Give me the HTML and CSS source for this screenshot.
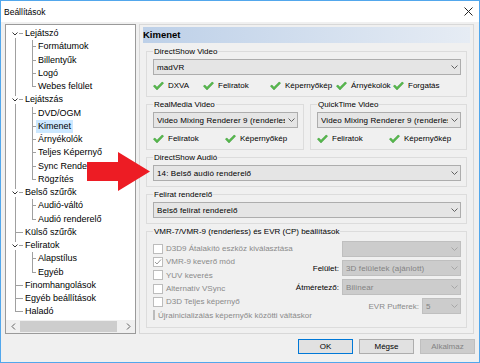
FILE: index.html
```html
<!DOCTYPE html>
<html lang="hu">
<head>
  <meta charset="UTF-8" />
  <title>Beállítások</title>
  <link rel="stylesheet" href="styles.css">
</head>
<body>
  <div class="window">
    <div class="titlebar">
      <span class="title">Beállítások</span>
      <svg class="close" width="9" height="9" viewBox="0 0 9 9"><path d="M0.5 0.5 L8.5 8.5 M8.5 0.5 L0.5 8.5" stroke="#222" stroke-width="1"/></svg>
    </div>

    <div class="main">
      <div class="tree">
        <div class="rows">
          <div class="row"><span class="c1 first"><i class="chev"><svg width="8" height="8" viewBox="0 0 8 8"><path d="M1.5 2.5 L4 5 L6.5 2.5" fill="none" stroke="#333"/></svg></i></span><span class="lbl">Lejátszó</span></div>
          <div class="row"><span class="c1 pass"></span><span class="c2"></span><span class="lbl">Formátumok</span></div>
          <div class="row"><span class="c1 pass"></span><span class="c2"></span><span class="lbl">Billentyűk</span></div>
          <div class="row"><span class="c1 pass"></span><span class="c2"></span><span class="lbl">Logó</span></div>
          <div class="row"><span class="c1 pass"></span><span class="c2 last"></span><span class="lbl">Webes felület</span></div>
          <div class="row"><span class="c1"><i class="chev"><svg width="8" height="8" viewBox="0 0 8 8"><path d="M1.5 2.5 L4 5 L6.5 2.5" fill="none" stroke="#333"/></svg></i></span><span class="lbl">Lejátszás</span></div>
          <div class="row"><span class="c1 pass"></span><span class="c2"></span><span class="lbl">DVD/OGM</span></div>
          <div class="row"><span class="c1 pass"></span><span class="c2"></span><span class="lbl selected">Kimenet</span></div>
          <div class="row"><span class="c1 pass"></span><span class="c2"></span><span class="lbl">Árnyékolók</span></div>
          <div class="row"><span class="c1 pass"></span><span class="c2"></span><span class="lbl">Teljes Képernyő</span></div>
          <div class="row"><span class="c1 pass"></span><span class="c2"></span><span class="lbl">Sync Renderer</span></div>
          <div class="row"><span class="c1 pass"></span><span class="c2 last"></span><span class="lbl">Rögzítés</span></div>
          <div class="row"><span class="c1"><i class="chev"><svg width="8" height="8" viewBox="0 0 8 8"><path d="M1.5 2.5 L4 5 L6.5 2.5" fill="none" stroke="#333"/></svg></i></span><span class="lbl">Belső szűrők</span></div>
          <div class="row"><span class="c1 pass"></span><span class="c2"></span><span class="lbl">Audió-váltó</span></div>
          <div class="row"><span class="c1 pass"></span><span class="c2 last"></span><span class="lbl">Audió renderelő</span></div>
          <div class="row"><span class="c1"></span><span class="lbl">Külső szűrők</span></div>
          <div class="row"><span class="c1"><i class="chev"><svg width="8" height="8" viewBox="0 0 8 8"><path d="M1.5 2.5 L4 5 L6.5 2.5" fill="none" stroke="#333"/></svg></i></span><span class="lbl">Feliratok</span></div>
          <div class="row"><span class="c1 pass"></span><span class="c2"></span><span class="lbl">Alapstílus</span></div>
          <div class="row"><span class="c1 pass"></span><span class="c2 last"></span><span class="lbl">Egyéb</span></div>
          <div class="row"><span class="c1"></span><span class="lbl">Finomhangolások</span></div>
          <div class="row"><span class="c1"></span><span class="lbl">Egyéb beállítások</span></div>
          <div class="row"><span class="c1 last"></span><span class="lbl">Haladó</span></div>
        </div>
        <div class="hscroll">
          <span class="sbtn"><svg width="5" height="7" viewBox="0 0 5 7"><path d="M4 0.5 L1 3.5 L4 6.5" fill="none" stroke="#606060"/></svg></span>
          <span class="thumb"></span>
          <span class="track"></span>
          <span class="sbtn"><svg width="5" height="7" viewBox="0 0 5 7"><path d="M1 0.5 L4 3.5 L1 6.5" fill="none" stroke="#606060"/></svg></span>
        </div>
      </div>

      <div class="page">
        <div class="caption">Kimenet</div>

        <fieldset class="group">
          <legend>DirectShow Video</legend>
          <div class="combo"><span>madVR</span><svg width="7" height="4" viewBox="0 0 7 4"><path d="M0.5 0.5 L3.5 3.5 L6.5 0.5" fill="none" stroke="#606060"/></svg></div>
          <div class="checks five">
            <span class="chk"><svg width="11" height="9" viewBox="0 0 11 9"><path d="M1 4.5 L4 7.5 L10 1.5" fill="none" stroke="#3f9f3a" stroke-width="2.4"/><path d="M1 4.5 L4 7.5 L10 1.5" fill="none" stroke="#6fd15f" stroke-width="1"/></svg>DXVA</span>
            <span class="chk"><svg width="11" height="9" viewBox="0 0 11 9"><path d="M1 4.5 L4 7.5 L10 1.5" fill="none" stroke="#3f9f3a" stroke-width="2.4"/><path d="M1 4.5 L4 7.5 L10 1.5" fill="none" stroke="#6fd15f" stroke-width="1"/></svg>Feliratok</span>
            <span class="chk"><svg width="11" height="9" viewBox="0 0 11 9"><path d="M1 4.5 L4 7.5 L10 1.5" fill="none" stroke="#3f9f3a" stroke-width="2.4"/><path d="M1 4.5 L4 7.5 L10 1.5" fill="none" stroke="#6fd15f" stroke-width="1"/></svg>Képernyőkép</span>
            <span class="chk"><svg width="11" height="9" viewBox="0 0 11 9"><path d="M1 4.5 L4 7.5 L10 1.5" fill="none" stroke="#3f9f3a" stroke-width="2.4"/><path d="M1 4.5 L4 7.5 L10 1.5" fill="none" stroke="#6fd15f" stroke-width="1"/></svg>Árnyékolók</span>
            <span class="chk"><svg width="11" height="9" viewBox="0 0 11 9"><path d="M1 4.5 L4 7.5 L10 1.5" fill="none" stroke="#3f9f3a" stroke-width="2.4"/><path d="M1 4.5 L4 7.5 L10 1.5" fill="none" stroke="#6fd15f" stroke-width="1"/></svg>Forgatás</span>
          </div>
        </fieldset>

        <div class="pair">
          <fieldset class="group">
            <legend>RealMedia Video</legend>
            <div class="combo"><span>Video Mixing Renderer 9 (renderless)</span><svg width="7" height="4" viewBox="0 0 7 4"><path d="M0.5 0.5 L3.5 3.5 L6.5 0.5" fill="none" stroke="#606060"/></svg></div>
            <div class="checks two">
              <span class="chk"><svg width="11" height="9" viewBox="0 0 11 9"><path d="M1 4.5 L4 7.5 L10 1.5" fill="none" stroke="#3f9f3a" stroke-width="2.4"/><path d="M1 4.5 L4 7.5 L10 1.5" fill="none" stroke="#6fd15f" stroke-width="1"/></svg>Feliratok</span>
              <span class="chk"><svg width="11" height="9" viewBox="0 0 11 9"><path d="M1 4.5 L4 7.5 L10 1.5" fill="none" stroke="#3f9f3a" stroke-width="2.4"/><path d="M1 4.5 L4 7.5 L10 1.5" fill="none" stroke="#6fd15f" stroke-width="1"/></svg>Képernyőkép</span>
            </div>
          </fieldset>
          <fieldset class="group">
            <legend>QuickTime Video</legend>
            <div class="combo"><span>Video Mixing Renderer 9 (renderless)</span><svg width="7" height="4" viewBox="0 0 7 4"><path d="M0.5 0.5 L3.5 3.5 L6.5 0.5" fill="none" stroke="#606060"/></svg></div>
            <div class="checks two">
              <span class="chk"><svg width="11" height="9" viewBox="0 0 11 9"><path d="M1 4.5 L4 7.5 L10 1.5" fill="none" stroke="#3f9f3a" stroke-width="2.4"/><path d="M1 4.5 L4 7.5 L10 1.5" fill="none" stroke="#6fd15f" stroke-width="1"/></svg>Feliratok</span>
              <span class="chk"><svg width="11" height="9" viewBox="0 0 11 9"><path d="M1 4.5 L4 7.5 L10 1.5" fill="none" stroke="#3f9f3a" stroke-width="2.4"/><path d="M1 4.5 L4 7.5 L10 1.5" fill="none" stroke="#6fd15f" stroke-width="1"/></svg>Képernyőkép</span>
            </div>
          </fieldset>
        </div>

        <fieldset class="group">
          <legend>DirectShow Audió</legend>
          <div class="combo"><span>14: Belső audió renderelő</span><svg width="7" height="4" viewBox="0 0 7 4"><path d="M0.5 0.5 L3.5 3.5 L6.5 0.5" fill="none" stroke="#606060"/></svg></div>
        </fieldset>

        <fieldset class="group">
          <legend>Felirat renderelő</legend>
          <div class="combo"><span>Belső felirat renderelő</span><svg width="7" height="4" viewBox="0 0 7 4"><path d="M0.5 0.5 L3.5 3.5 L6.5 0.5" fill="none" stroke="#606060"/></svg></div>
        </fieldset>

        <fieldset class="group vmr">
          <legend>VMR-7/VMR-9 (renderless) és EVR (CP) beállítások</legend>
          <div class="vmr-body">
            <div class="opts">
              <label class="opt"><span class="cb"></span>D3D9 Átalakító eszköz kiválasztása</label>
              <label class="opt"><span class="cb"><svg width="8" height="8" viewBox="0 0 8 8"><path d="M1 4 L3 6 L7 1.5" fill="none" stroke="#9a9a9a"/></svg></span>VMR-9 keverő mód</label>
              <label class="opt"><span class="cb"></span>YUV keverés</label>
              <label class="opt"><span class="cb"></span>Alternatív VSync</label>
              <label class="opt"><span class="cb"></span>D3D Teljes képernyő</label>
              <label class="opt"><span class="cb"></span>Újrainicializálás képernyők közötti váltáskor</label>
            </div>
            <div class="side">
              <div class="field"><div class="combo off wide"><span></span><svg width="7" height="4" viewBox="0 0 7 4"><path d="M0.5 0.5 L3.5 3.5 L6.5 0.5" fill="none" stroke="#a6a6a6"/></svg></div></div>
              <div class="field"><span class="flabel">Felület:</span><div class="combo off wide"><span>3D felületek (ajánlott)</span><svg width="7" height="4" viewBox="0 0 7 4"><path d="M0.5 0.5 L3.5 3.5 L6.5 0.5" fill="none" stroke="#a6a6a6"/></svg></div></div>
              <div class="field"><span class="flabel">Átméretező:</span><div class="combo off wide"><span>Bilinear</span><svg width="7" height="4" viewBox="0 0 7 4"><path d="M0.5 0.5 L3.5 3.5 L6.5 0.5" fill="none" stroke="#a6a6a6"/></svg></div></div>
              <div class="field"><span class="flabel dim">EVR Pufferek:</span><div class="combo off small"><span>5</span><svg width="7" height="4" viewBox="0 0 7 4"><path d="M0.5 0.5 L3.5 3.5 L6.5 0.5" fill="none" stroke="#a6a6a6"/></svg></div></div>
            </div>
          </div>
        </fieldset>
      </div>
    </div>

    <div class="footer">
      <button class="btn default">OK</button>
      <button class="btn">Mégse</button>
      <button class="btn" disabled>Alkalmaz</button>
    </div>

    <svg class="pointer" width="64" height="39" viewBox="0 0 64 39"><polygon points="0,10 31,10 31,0 63,19.5 31,39 31,29 0,29" fill="#ed1c24"/></svg>
  </div>
</body>
</html>
```

FILE: styles.css
```css
* {
  box-sizing: border-box;
}
body {
  margin: 0;
  font-family: "Liberation Sans", Arial, sans-serif;
  font-size: 8px;
  color: #000;
  background: #fff;
}
.window {
  width: 480px;
  height: 363px;
  border: 1px solid #52a7ec;
  background: #f0f0f0;
  display: flex;
  flex-direction: column;
  position: relative;
}
.titlebar {
  height: 21px;
  background: #fff;
  display: flex;
  align-items: center;
  justify-content: space-between;
  padding: 0 6px 0 3px;
  flex: none;
}
.title {
  font-size: 8.5px;
}

/* layout */
.main {
  display: flex;
  gap: 3px;
  padding: 2px 5px 0 4px;
  height: 312px;
  flex: none;
}

/* tree */
.tree {
  width: 131px;
  height: 310px;
  flex: none;
  background: #fff;
  border: 1px solid #9a9a9a;
  display: flex;
  flex-direction: column;
  font-size: 9px;
}
.rows {
  flex: 1;
  padding-top: 2px;
}
.row {
  display: flex;
  height: 13.25px;
}
.c1, .c2 {
  flex: none;
  display: flex;
  align-items: center;
  background:
    linear-gradient(#a0a0a0, #a0a0a0) 9px 0 / 1px 100% no-repeat,
    linear-gradient(#a0a0a0, #a0a0a0) 9px 6px / 100% 1px no-repeat;
}
.c1 {
  width: 17px;
  padding-left: 5px;
}
.c2 {
  width: 13px;
}
.c1.first {
  background:
    linear-gradient(#a0a0a0, #a0a0a0) 9px 6px / 1px 100% no-repeat,
    linear-gradient(#a0a0a0, #a0a0a0) 9px 6px / 100% 1px no-repeat;
}
.c1.last, .c2.last {
  background:
    linear-gradient(#a0a0a0, #a0a0a0) 9px 0 / 1px 7px no-repeat,
    linear-gradient(#a0a0a0, #a0a0a0) 9px 6px / 100% 1px no-repeat;
}
.c1.pass {
  background: linear-gradient(#a0a0a0, #a0a0a0) 9px 0 / 1px 100% no-repeat;
}
.chev {
  width: 8px;
  height: 8px;
  background: #fff;
  display: flex;
}
.lbl {
  padding: 0 2px;
  line-height: 13px;
  white-space: nowrap;
}
.lbl.selected {
  background: #cce8ff;
}
.hscroll {
  height: 13px;
  display: flex;
  align-items: center;
  background: #f0f0f0;
  flex: none;
}
.sbtn {
  width: 14px;
  height: 13px;
  display: flex;
  align-items: center;
  justify-content: center;
}
.thumb {
  width: 97px;
  height: 11px;
  background: #cdcdcd;
}
.track {
  flex: 1;
}

/* options page */
.page {
  flex: 1;
  min-width: 0;
  height: 310px;
  border: 1px solid #d8d8d8;
  padding: 2px 3px 0;
  display: flex;
  flex-direction: column;
}
.caption {
  height: 16px;
  line-height: 16px;
  font-size: 9.5px;
  font-weight: bold;
  background: linear-gradient(to right, #bdd0e8, #e6ecf4);
}
.group {
  margin: 2px 3px 0;
  padding: 2px 5px 5px 6px;
  border: 1px solid #dcdcdc;
  min-width: 0;
}
.caption + .group {
  margin-top: 3px;
}
.group legend {
  padding: 0 1px;
  line-height: 11px;
}
.pair {
  display: grid;
  grid-template-columns: 158px minmax(0, 1fr);
  gap: 6px;
  margin: 0 3px;
}
.pair .group {
  margin: 2px 0 0;
}
.combo {
  height: 16px;
  min-width: 0;
  border: 1px solid #adadad;
  background: #e5e5e5;
  display: flex;
  align-items: center;
  padding: 0 2px 0 3px;
  letter-spacing: 0.12px;
}
.combo span {
  flex: 1;
  min-width: 0;
  overflow: hidden;
  white-space: nowrap;
}
.combo svg {
  flex: none;
  margin-left: 3px;
}
.combo.off {
  background: #cccccc;
  border-color: #bfbfbf;
  color: #838383;
}
.combo.wide {
  width: 119px;
}
.combo.small {
  width: 39px;
}
.checks {
  display: grid;
  margin-top: 5px;
  height: 11px;
  align-items: center;
}
.checks.five {
  grid-template-columns: 50px 67px 66px 57px auto;
}
.checks.two {
  grid-template-columns: 72px auto;
}
.chk {
  display: flex;
  align-items: center;
  gap: 4px;
  white-space: nowrap;
}

/* VMR / EVR */
.vmr {
  flex: 1;
  margin-bottom: 6px;
}
.vmr-body {
  display: flex;
  padding-top: 2px;
}
.opts {
  flex: 1;
  min-width: 0;
  display: flex;
  flex-direction: column;
  padding-top: 1px;
}
.opt {
  height: 13.3px;
  display: flex;
  align-items: center;
  gap: 3px;
  color: #8a8a8a;
  white-space: nowrap;
}
.cb {
  width: 10px;
  height: 10px;
  border: 1px solid #bcbcbc;
  background: #fff;
  display: flex;
  align-items: center;
  justify-content: center;
}
.side {
  flex: none;
  display: flex;
  flex-direction: column;
  gap: 3px;
}
.field {
  display: flex;
  justify-content: flex-end;
  align-items: center;
  gap: 3px;
}
.flabel.dim {
  color: #8a8a8a;
}

/* buttons */
.footer {
  flex: 1;
  display: flex;
  justify-content: flex-end;
  align-items: flex-start;
  gap: 6px;
  padding: 5px 4px 0 0;
}
.btn {
  width: 55px;
  height: 15px;
  padding: 0;
  font: inherit;
  background: #e1e1e1;
  border: 1px solid #adadad;
  color: #000;
}
.btn.default {
  border-color: #0078d7;
}
.btn:disabled {
  background: #cccccc;
  border-color: #bfbfbf;
  color: #838383;
}

/* red callout arrow on top of the dialog */
.pointer {
  position: absolute;
  left: 86px;
  top: 151px;
}
```
